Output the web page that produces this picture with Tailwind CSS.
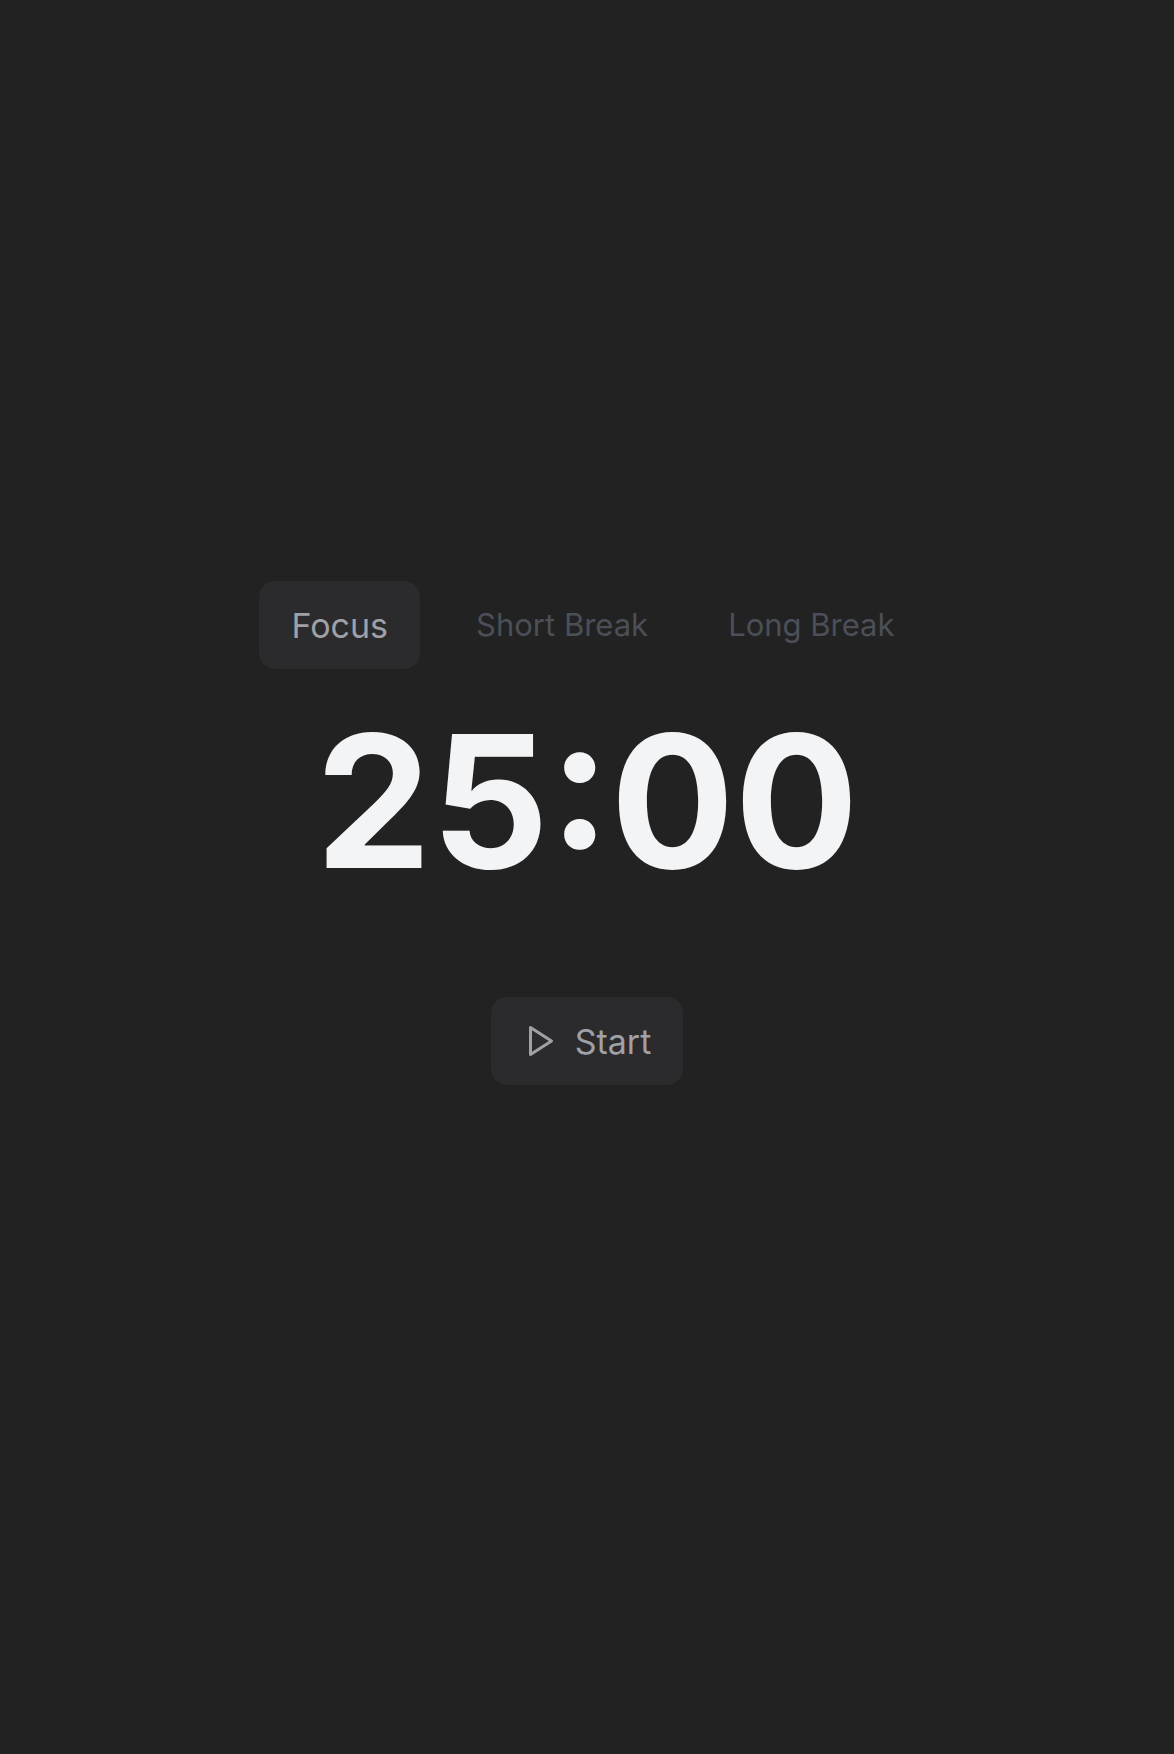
<!DOCTYPE html>
<html lang="en">
<head>
    <meta charset="UTF-8">
    <meta name="viewport" content="width=device-width, initial-scale=1.0">
    <title>Focus Timer</title>
    <script src="https://cdn.jsdelivr.net/npm/@tailwindcss/browser@4"></script>
</head>
<body class="bg-[#222222] font-['Inter',sans-serif] min-h-screen flex flex-col items-center justify-center">
    <main class="flex flex-col items-center pb-22">
        <!-- Session modes -->
        <nav class="flex items-center pl-3">
            <button type="button" class="h-[88px] px-8 mr-6 rounded-2xl bg-[#2b2b2d] text-[34px] text-[#9fa1a6]">Focus</button>
            <button type="button" class="h-20 px-8 text-[31px] text-[#4b4f57]">Short Break</button>
            <button type="button" class="h-20 px-8 ml-4 text-[31px] text-[#4b4f57]">Long Break</button>
        </nav>

        <!-- Timer -->
        <h1 id="timer" class="mt-9 text-[184px] leading-48 font-bold text-[#f3f4f6]">25:00</h1>

        <!-- Controls -->
        <button type="button" id="startButton" class="mt-25 h-[88px] px-8 rounded-2xl bg-[#2b2b2d] flex items-center gap-4 text-[34px] text-[#9fa1a6]">
            <svg class="size-9" viewBox="0 0 24 24" fill="none" stroke="currentColor" stroke-width="2" stroke-linecap="round" stroke-linejoin="round" aria-hidden="true">
                <path d="M5 3l14 9-14 9V3z"/>
            </svg>
            Start
        </button>
    </main>
</body>
</html>
